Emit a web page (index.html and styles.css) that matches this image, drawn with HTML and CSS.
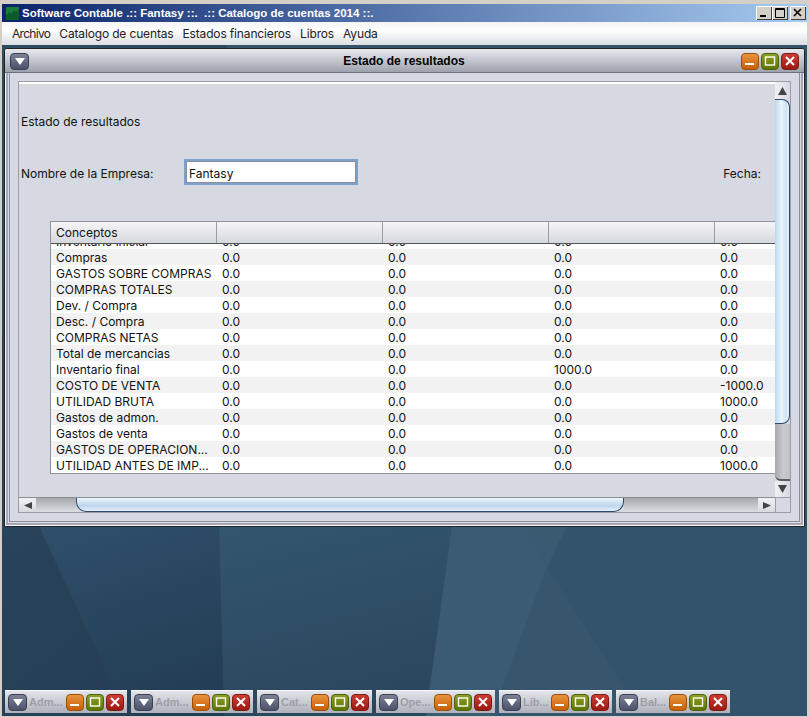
FILE: index.html
```html
<!DOCTYPE html>
<html lang="es">
<head>
    <meta charset="UTF-8">
    <meta name="viewport" content="width=device-width, initial-scale=1.0">
    <title>Software Contable</title>
    <link rel="stylesheet" href="styles.css">
</head>
<body>
<div class="app">
    <div class="app-title">
        <svg class="app-icon" width="13" height="13" viewBox="0 0 13 13"><rect width="13" height="13" fill="#1c7c3c"/><path d="M0 9 L3 5 L5 7 L8 3 L10 5 L13 2 L13 13 L0 13Z" fill="#0d5a2a"/></svg>
        <span class="app-name">Software Contable .:: Fantasy ::. &nbsp;.:: Catalogo de cuentas 2014 ::.</span>
        <div class="app-buttons">
            <span class="win-btn"><svg width="16" height="14" viewBox="0 0 16 14"><rect x="4" y="9" width="6" height="2" fill="#000"/></svg></span><span class="win-btn"><svg width="16" height="14" viewBox="0 0 16 14"><path d="M3.500 2.500h9v9h-9z M3 3.500h10" fill="none" stroke="#000"/></svg></span>
            <span class="win-btn win-close"><svg width="16" height="14" viewBox="0 0 16 14"><path d="M4 3l7 7M11 3l-7 7" stroke="#000" stroke-width="1.6"/></svg></span>
        </div>
    </div>
    <div class="menubar">
        <span>Archivo</span><span>Catalogo de cuentas</span><span>Estados financieros</span><span>Libros</span><span>Ayuda</span>
    </div>
    <div class="desktop">
        <svg class="wallpaper" width="805" height="671" viewBox="0 0 805 671">
            <defs>
                <linearGradient id="g0" x1="0" y1="0" x2="0.3" y2="1"><stop offset="0" stop-color="#2d4d62"/><stop offset="1" stop-color="#263f56"/></linearGradient>
                <linearGradient id="g1" x1="0" y1="0" x2="0.3" y2="1"><stop offset="0" stop-color="#2f4f6b"/><stop offset="1" stop-color="#243e56"/></linearGradient>
                <linearGradient id="g2" x1="0" y1="0" x2="0.3" y2="1"><stop offset="0" stop-color="#33566f"/><stop offset="1" stop-color="#2b475f"/></linearGradient>
            </defs>
            <rect width="805" height="671" fill="#33536c"/>
            <rect width="225" height="671" fill="url(#g0)"/>
            <path d="M37 481 L125 671 L222 671 L217 481Z" fill="url(#g1)"/>
            <path d="M217 481 L222 671 L424 671 L450 481Z" fill="url(#g2)"/>
            <path d="M450 481 L424 671 L490 671 L545 522 L565 481Z" fill="#3b5b75"/>
            <path d="M522 481 L545 522 L565 481Z" fill="#395a70"/>
            <path d="M545 522 L490 671 L640 671Z" fill="#37566e"/>
        </svg>
        <div class="frame">
            <div class="frame-title">
                <span class="btn btn-menu"><svg width="10" height="7" viewBox="0 0 10 7"><path d="M0 0h10L5 7z" fill="#fff"/></svg></span>
                <span class="frame-name">Estado de resultados</span>
                <div class="frame-buttons">
                    <span class="btn btn-min"><svg width="12" height="12" viewBox="0 0 12 12"><rect x="1" y="8" width="9" height="2" fill="#fff"/></svg></span>
                    <span class="btn btn-max"><svg width="12" height="12" viewBox="0 0 12 12"><rect x="1.500" y="2" width="9" height="8" fill="none" stroke="#fff" stroke-width="1.400"/></svg></span>
                    <span class="btn btn-close"><svg width="12" height="12" viewBox="0 0 12 12"><path d="M2 2l8 8M10 2l-8 8" stroke="#fff" stroke-width="2"/></svg></span>
                </div>
            </div>
            <div class="frame-body">
                <div class="scrollpane">
                    <div class="viewport">
                        <div class="heading">Estado de resultados</div>
                        <div class="form-row">
                            <label class="field-label">Nombre de la Empresa:</label>
                            <div class="text-field">Fantasy</div>
                            <label class="date-label">Fecha:</label>
                        </div>
                        <div class="table">
                            <div class="thead">
                                <div class="th">Conceptos</div><div class="th"></div><div class="th"></div><div class="th"></div><div class="th"></div>
                            </div>
                            <div class="tbody">
                                <div class="tr"><div>Inventario inicial</div><div>0.0</div><div>0.0</div><div>0.0</div><div>0.0</div></div>
                                <div class="tr"><div>Compras</div><div>0.0</div><div>0.0</div><div>0.0</div><div>0.0</div></div>
                                <div class="tr"><div>GASTOS SOBRE COMPRAS</div><div>0.0</div><div>0.0</div><div>0.0</div><div>0.0</div></div>
                                <div class="tr"><div>COMPRAS TOTALES</div><div>0.0</div><div>0.0</div><div>0.0</div><div>0.0</div></div>
                                <div class="tr"><div>Dev. / Compra</div><div>0.0</div><div>0.0</div><div>0.0</div><div>0.0</div></div>
                                <div class="tr"><div>Desc. / Compra</div><div>0.0</div><div>0.0</div><div>0.0</div><div>0.0</div></div>
                                <div class="tr"><div>COMPRAS NETAS</div><div>0.0</div><div>0.0</div><div>0.0</div><div>0.0</div></div>
                                <div class="tr"><div>Total de mercancias</div><div>0.0</div><div>0.0</div><div>0.0</div><div>0.0</div></div>
                                <div class="tr"><div>Inventario final</div><div>0.0</div><div>0.0</div><div>1000.0</div><div>0.0</div></div>
                                <div class="tr"><div>COSTO DE VENTA</div><div>0.0</div><div>0.0</div><div>0.0</div><div>-1000.0</div></div>
                                <div class="tr"><div>UTILIDAD BRUTA</div><div>0.0</div><div>0.0</div><div>0.0</div><div>1000.0</div></div>
                                <div class="tr"><div>Gastos de admon.</div><div>0.0</div><div>0.0</div><div>0.0</div><div>0.0</div></div>
                                <div class="tr"><div>Gastos de venta</div><div>0.0</div><div>0.0</div><div>0.0</div><div>0.0</div></div>
                                <div class="tr"><div>GASTOS DE OPERACION...</div><div>0.0</div><div>0.0</div><div>0.0</div><div>0.0</div></div>
                                <div class="tr"><div>UTILIDAD ANTES DE IMP...</div><div>0.0</div><div>0.0</div><div>0.0</div><div>1000.0</div></div>
                            </div>
                        </div>
                    </div>
                    <div class="vscroll">
                        <div class="arrow-btn arrow-up"><svg width="9" height="8" viewBox="0 0 9 8"><path d="M4.500 0L9 8H0z" fill="#444"/></svg></div>
                        <div class="vthumb"></div>
                        <div class="vtrack"></div>
                        <div class="arrow-btn"><svg width="9" height="8" viewBox="0 0 9 8"><path d="M0 0h9L4.500 8z" fill="#444"/></svg></div>
                    </div>
                    <div class="hscroll">
                        <div class="arrow-btn"><svg width="8" height="7" viewBox="0 0 8 7"><path d="M8 0v7L0 3.500z" fill="#444"/></svg></div>
                        <div class="htrack htrack-left"></div>
                        <div class="hthumb"></div>
                        <div class="htrack"></div>
                        <div class="arrow-btn"><svg width="8" height="7" viewBox="0 0 8 7"><path d="M0 0v7l8-3.500z" fill="#444"/></svg></div>
                    </div>
                    <div class="corner"></div>
                </div>
            </div>
        </div>
        <div class="iconbar">
            <div class="icon-frame w122"><span class="btn btn-menu"><svg width="10" height="7" viewBox="0 0 10 7"><path d="M0 0h10L5 7z" fill="#fff"/></svg></span><span class="icon-name">Adm...</span><span class="btn btn-min"><svg width="12" height="12" viewBox="0 0 12 12"><rect x="1" y="8" width="9" height="2" fill="#fff"/></svg></span><span class="btn btn-max"><svg width="12" height="12" viewBox="0 0 12 12"><rect x="1.500" y="2" width="9" height="8" fill="none" stroke="#fff" stroke-width="1.400"/></svg></span><span class="btn btn-close"><svg width="12" height="12" viewBox="0 0 12 12"><path d="M2 2l8 8M10 2l-8 8" stroke="#fff" stroke-width="2"/></svg></span></div>
            <div class="icon-frame w122"><span class="btn btn-menu"><svg width="10" height="7" viewBox="0 0 10 7"><path d="M0 0h10L5 7z" fill="#fff"/></svg></span><span class="icon-name">Adm...</span><span class="btn btn-min"><svg width="12" height="12" viewBox="0 0 12 12"><rect x="1" y="8" width="9" height="2" fill="#fff"/></svg></span><span class="btn btn-max"><svg width="12" height="12" viewBox="0 0 12 12"><rect x="1.500" y="2" width="9" height="8" fill="none" stroke="#fff" stroke-width="1.400"/></svg></span><span class="btn btn-close"><svg width="12" height="12" viewBox="0 0 12 12"><path d="M2 2l8 8M10 2l-8 8" stroke="#fff" stroke-width="2"/></svg></span></div>
            <div class="icon-frame w115"><span class="btn btn-menu"><svg width="10" height="7" viewBox="0 0 10 7"><path d="M0 0h10L5 7z" fill="#fff"/></svg></span><span class="icon-name">Cat...</span><span class="btn btn-min"><svg width="12" height="12" viewBox="0 0 12 12"><rect x="1" y="8" width="9" height="2" fill="#fff"/></svg></span><span class="btn btn-max"><svg width="12" height="12" viewBox="0 0 12 12"><rect x="1.500" y="2" width="9" height="8" fill="none" stroke="#fff" stroke-width="1.400"/></svg></span><span class="btn btn-close"><svg width="12" height="12" viewBox="0 0 12 12"><path d="M2 2l8 8M10 2l-8 8" stroke="#fff" stroke-width="2"/></svg></span></div>
            <div class="icon-frame w119"><span class="btn btn-menu"><svg width="10" height="7" viewBox="0 0 10 7"><path d="M0 0h10L5 7z" fill="#fff"/></svg></span><span class="icon-name">Ope...</span><span class="btn btn-min"><svg width="12" height="12" viewBox="0 0 12 12"><rect x="1" y="8" width="9" height="2" fill="#fff"/></svg></span><span class="btn btn-max"><svg width="12" height="12" viewBox="0 0 12 12"><rect x="1.500" y="2" width="9" height="8" fill="none" stroke="#fff" stroke-width="1.400"/></svg></span><span class="btn btn-close"><svg width="12" height="12" viewBox="0 0 12 12"><path d="M2 2l8 8M10 2l-8 8" stroke="#fff" stroke-width="2"/></svg></span></div>
            <div class="icon-frame w113"><span class="btn btn-menu"><svg width="10" height="7" viewBox="0 0 10 7"><path d="M0 0h10L5 7z" fill="#fff"/></svg></span><span class="icon-name">Lib...</span><span class="btn btn-min"><svg width="12" height="12" viewBox="0 0 12 12"><rect x="1" y="8" width="9" height="2" fill="#fff"/></svg></span><span class="btn btn-max"><svg width="12" height="12" viewBox="0 0 12 12"><rect x="1.500" y="2" width="9" height="8" fill="none" stroke="#fff" stroke-width="1.400"/></svg></span><span class="btn btn-close"><svg width="12" height="12" viewBox="0 0 12 12"><path d="M2 2l8 8M10 2l-8 8" stroke="#fff" stroke-width="2"/></svg></span></div>
            <div class="icon-frame w114"><span class="btn btn-menu"><svg width="10" height="7" viewBox="0 0 10 7"><path d="M0 0h10L5 7z" fill="#fff"/></svg></span><span class="icon-name">Bal...</span><span class="btn btn-min"><svg width="12" height="12" viewBox="0 0 12 12"><rect x="1" y="8" width="9" height="2" fill="#fff"/></svg></span><span class="btn btn-max"><svg width="12" height="12" viewBox="0 0 12 12"><rect x="1.500" y="2" width="9" height="8" fill="none" stroke="#fff" stroke-width="1.400"/></svg></span><span class="btn btn-close"><svg width="12" height="12" viewBox="0 0 12 12"><path d="M2 2l8 8M10 2l-8 8" stroke="#fff" stroke-width="2"/></svg></span></div>
        </div>
    </div>
</div>
</body>
</html>
```

FILE: styles.css
```css
html, body { margin: 0; height: 717px; overflow: hidden; }
body { font-family: Inter, "Liberation Sans", sans-serif; font-size: 12px; color: #111; background: #d4d0c8; }

.app { height: 717px; box-sizing: border-box; padding: 4px 2px 1px 2px; display: flex; flex-direction: column; }

.app-title { height: 18px; display: flex; align-items: center; padding: 0 0 0 4px; background: linear-gradient(90deg, #0a246a, #a6caf0); color: #fff; flex: none; }
.app-icon { margin-right: 3px; flex: none; }
.app-name { font-family: "Liberation Sans", sans-serif; font-weight: bold; font-size: 11.5px; white-space: nowrap; }
.app-buttons { margin-left: auto; display: flex; margin-right: 1px; }
.win-btn { width: 16px; height: 14px; background: #d4d0c8; box-shadow: inset 1px 1px 0 #fff, inset -1px -1px 0 #404040; display: block; }
.win-close { margin-left: 2px; }

.menubar { height: 23px; flex: none; display: flex; align-items: center; gap: 9px; padding-left: 10px; background: linear-gradient(#f4f4f6, #fff 35%, #dcdee3); color: #222; letter-spacing: -0.15px; }
.menubar span:first-child { letter-spacing: -0.7px; }

.desktop { flex: 1; position: relative; overflow: hidden; background: #33536c; }
.wallpaper { position: absolute; left: 0; top: 0; }

/* internal frame, sits on the desktop */
.frame { position: absolute; left: 2px; top: 3px; width: 801px; height: 479px; box-sizing: border-box; background: #d6d9e1; border: 1px solid #222; border-radius: 3px 3px 0 0; box-shadow: inset 0 0 0 1px #f4f5f8, inset 0 0 0 3px #a6a9b2; padding: 0 4px 4px 4px; display: flex; flex-direction: column; }
.frame-title { height: 24px; box-sizing: border-box; flex: none; display: flex; align-items: center; position: relative; margin: 0 -4px; background: linear-gradient(#e8e9ee, #9ea2ad); border-bottom: 1px solid #6d7180; padding: 1px 5px 0 5px; border-radius: 2px 2px 0 0; }
.frame-name { position: absolute; left: 0; right: 1px; text-align: center; font-family: "Liberation Sans", sans-serif; font-weight: bold; color: #000; }
.frame-buttons { margin-left: auto; display: flex; gap: 2px; position: relative; }

.btn { width: 18px; height: 17px; box-sizing: border-box; border-radius: 4px; display: flex; align-items: center; justify-content: center; flex: none; border: 1px solid; }
.btn-menu { background: linear-gradient(#7c8296, #4b526a); border-color: #3b4154; width: 19px; }
.btn-min { background: linear-gradient(#e8933f, #c95f04); border-color: #9a5008; }
.btn-max { background: linear-gradient(#8ea02a, #5e7503); border-color: #4e6208; }
.btn-close { background: linear-gradient(#cc3d33, #9a1a12); border-color: #7e1a12; }

.frame-body { flex: 1; background: #d6d9e1; border: 1px solid #8d919c; border-top: 0; padding: 8px; display: flex; min-height: 0; }

.scrollpane { flex: 1; border: 1px solid #9a9da7; display: grid; grid-template-columns: 756px 1fr; grid-template-rows: 415px 1fr; min-width: 0; }

.viewport { border-top: 2px solid #fff; overflow: hidden; position: relative; }
.heading { margin-top: 31px; padding-left: 2px; height: 14px; line-height: 14px; }
.form-row { display: flex; align-items: center; margin-top: 30px; height: 26px; padding-left: 2px; }
.field-label { width: 163px; flex: none; padding-top: 2px; }
.text-field { width: 174px; height: 26px; box-sizing: border-box; background: #fff; border: 2px solid #7aa2cc; box-shadow: inset 0 0 0 1px #8d9099; padding: 0 3px; line-height: 25px; flex: none; }
.date-label { margin-left: auto; margin-right: 14px; padding-top: 2px; }

.table { margin: 36px 0 0 31px; width: 900px; border: 1px solid #8f929c; height: 253px; box-sizing: border-box; }
.thead { display: flex; height: 22px; box-sizing: border-box; background: linear-gradient(#f6f6f8, #d6d8df); border-bottom: 1px solid #555; }
.th { width: 166px; flex: none; box-sizing: border-box; border-right: 1px solid #9a9da7; padding: 4px 0 0 5px; height: 21px; line-height: 14px; }
.tbody { height: 229px; overflow: hidden; display: flex; flex-direction: column; justify-content: flex-end; background: #fff; }
.tr { display: flex; height: 16px; flex: none; line-height: 17px; background: #fff; }
.tr:nth-child(even) { background: #f2f2f2; }
.tr > div { width: 166px; flex: none; box-sizing: border-box; padding-left: 5px; white-space: nowrap; }

.vscroll { display: flex; flex-direction: column; background: #d6d9e1; }
.arrow-btn { height: 16px; flex: none; display: flex; align-items: center; justify-content: center; background: linear-gradient(90deg, #f0f1f4, #d6d9e1); }
.arrow-up { height: 17px; }
.vthumb { height: 325px; flex: none; background: linear-gradient(90deg, #bcd8ee, #eaf4fb 45%, #cfe2f2 80%, #e8f2fa); border: 1px solid #2f4a6c; border-left: 0; border-radius: 0 8px 8px 0; box-sizing: border-box; }
.vtrack { flex: 1; background: linear-gradient(90deg, #a6a8ae, #c9cbd1 55%, #c0c2c8); border-bottom: 2px solid #5a5c64; border-radius: 0 0 0 6px; }

.hscroll { display: flex; background: #d6d9e1; border-top: 1px solid #8c8e96; height: 14px; }
.hscroll .arrow-btn { width: 17px; height: auto; background: linear-gradient(#f0f1f4, #d6d9e1); }
.htrack { flex: 1; background: linear-gradient(#a6a8ae, #dcdde2); }
.htrack-left { flex: none; width: 40px; }
.hthumb { width: 548px; flex: none; box-sizing: border-box; background: linear-gradient(#eef6fc, #bcd5ec 60%, #e6f1fa); border: 1px solid #2f4a6c; border-top: 0; border-radius: 0 0 10px 10px; }
.corner { background: #d6d9e1; border-left: 1px solid #9a9da7; border-top: 1px solid #9a9da7; }

.iconbar { position: absolute; left: 3px; bottom: 3px; height: 23px; display: flex; gap: 4px; }
.icon-frame { height: 23px; box-sizing: border-box; display: flex; align-items: center; padding: 0 3px; gap: 2px; background: linear-gradient(#e3e5ea, #aeb1ba); border-top: 1px solid #f4f5f8; }
.w122 { width: 122px; }
.w115 { width: 115px; }
.w119 { width: 119px; }
.w113 { width: 113px; }
.w114 { width: 114px; }
.icon-name { flex: 1; min-width: 0; font-family: "Liberation Sans", sans-serif; font-size: 11px; font-weight: bold; color: #9b9ea8; white-space: nowrap; }
```
